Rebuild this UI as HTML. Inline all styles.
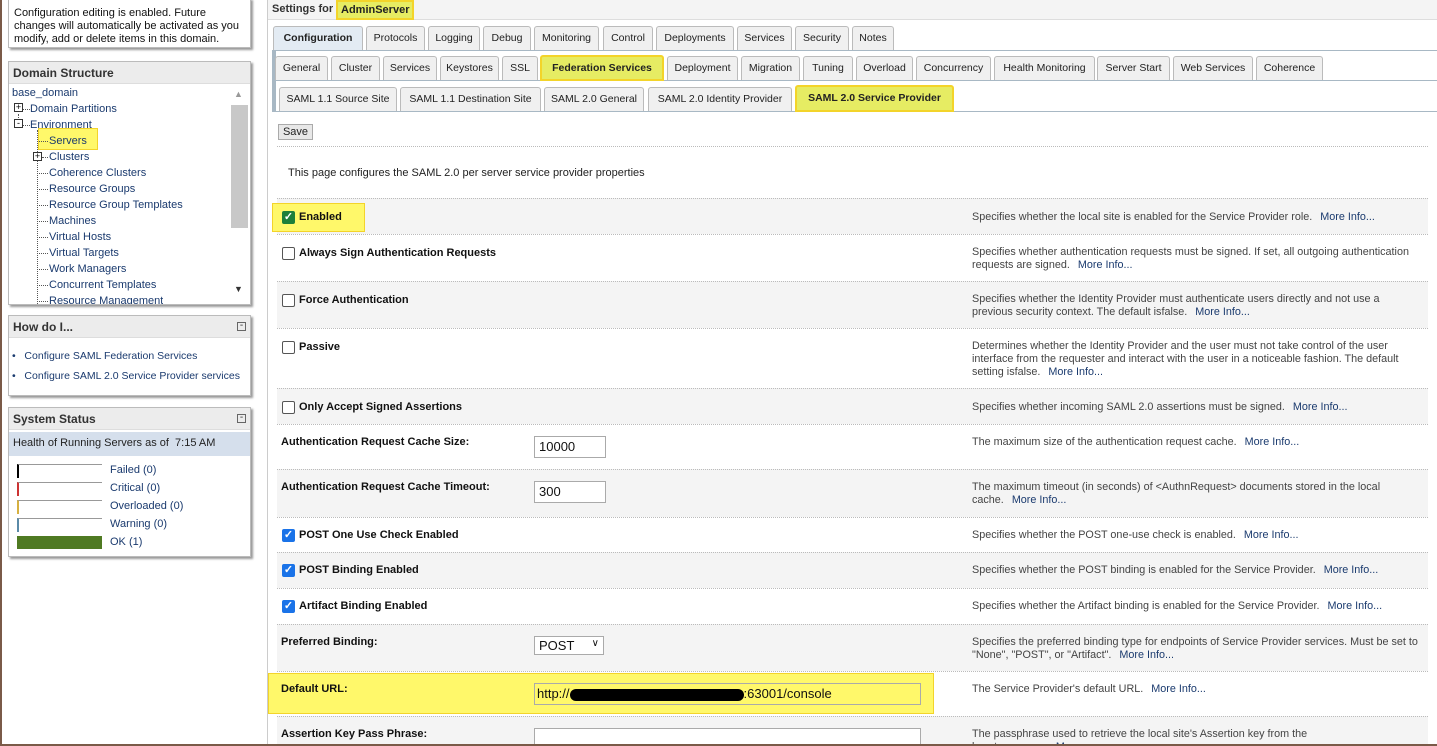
<!DOCTYPE html>
<html style="width:1437px;height:746px;overflow:hidden"><head><meta charset="utf-8">
<style>
*{box-sizing:border-box;margin:0;padding:0}
body{width:1437px;height:746px;overflow:hidden;background:#fff;font-family:"Liberation Sans",sans-serif;font-size:11px;color:#222;position:relative}
.a{position:absolute}
.box{position:absolute;border:1px solid #bbb;box-shadow:2px 2px 2px #999;background:#fff;overflow:hidden}
.hdr{background:#ececec;font-weight:bold;color:#333;font-size:12px;padding:4px 4px;height:22px;border-bottom:1px solid #ddd}
.lk{color:#1a3a6e;white-space:nowrap}
.tree div{position:absolute;font-size:11px;color:#1a3a6e;white-space:nowrap}
.tree .v{border-left:1px dotted #555;width:0}
.tree .h{border-top:1px dotted #555;height:0}
.tab{position:absolute;height:24px;border:1px solid #bbb;border-bottom:none;background:#f0f0f0;border-radius:3px 3px 0 0;text-align:center;font-size:10.5px;line-height:22px;color:#222;white-space:nowrap}
.hl{background:#e6ec63;border:2px solid #f3d42a;font-weight:bold}
.row{position:absolute;left:277px;width:1151px;border-top:1px dotted #bbb}
.g{background:#f4f4f4}
.lbl{position:absolute;left:22px;font-weight:bold;font-size:11px;color:#111}
.lbl2{position:absolute;left:4px;font-weight:bold;font-size:11px;color:#111}
.cb{position:absolute;left:5px;width:13px;height:13px;border:1px solid #555;border-radius:2px;background:#fff}
.cbc{background:#1a73e8;border-color:#1a73e8;color:#fff;font-size:11px;line-height:11px;text-align:center;font-weight:bold}
.desc{position:absolute;left:695px;width:446px;font-size:10.8px;color:#444;line-height:13px}
.desc span{color:#1a3a6e;margin-left:8px}
.inp{position:absolute;left:257px;height:22px;border:1px solid #aaa;background:#fff;font-size:13px;padding:2px 4px;color:#111;overflow:hidden}
</style></head><body>
<div class="a" style="left:0;top:0;width:2px;height:746px;background:#7a5a48"></div>
<div class="a" style="left:267px;top:0;width:1px;height:744px;background:#ccc"></div>

<div class="box" style="left:8px;top:-2px;width:243px;height:50px;padding:8px 5px;font-size:11px;line-height:13px;color:#111">Configuration editing is enabled. Future changes will automatically be activated as you modify, add or delete items in this domain.</div>

<div class="box" style="left:8px;top:61px;width:243px;height:244px">
<div class="hdr">Domain Structure</div>
<div class="tree">
<div class="v" style="left:9px;top:52px;height:14px"></div>
<div class="v" style="left:28px;top:68px;height:176px"></div>
<div class="h" style="left:14px;top:47px;width:7px"></div>
<div class="h" style="left:14px;top:63px;width:7px"></div>
<div class="h" style="left:28px;top:79px;width:11px"></div>
<div class="h" style="left:33px;top:95px;width:6px"></div>
<div class="h" style="left:28px;top:111px;width:11px"></div>
<div class="h" style="left:28px;top:127px;width:11px"></div>
<div class="h" style="left:28px;top:143px;width:11px"></div>
<div class="h" style="left:28px;top:159px;width:11px"></div>
<div class="h" style="left:28px;top:175px;width:11px"></div>
<div class="h" style="left:28px;top:191px;width:11px"></div>
<div class="h" style="left:28px;top:207px;width:11px"></div>
<div class="h" style="left:28px;top:223px;width:11px"></div>
<div class="h" style="left:28px;top:239px;width:11px"></div>
<div style="left:3px;top:25px">base_domain</div>
<div style="left:5px;top:41px;width:9px;height:9px;border:1px solid #333;background:#fff;font-size:9px;line-height:7px;text-align:center;color:#000">+</div><div style="left:21px;top:41px">Domain Partitions</div>
<div style="left:5px;top:57px;width:9px;height:9px;border:1px solid #333;background:#fff;font-size:9px;line-height:6px;text-align:center;color:#000">-</div><div style="left:21px;top:57px">Environment</div>
<div style="left:29px;top:66px;width:60px;height:22px;background:#fff86a;border:1px solid #f3d42a"></div>
<div class="h" style="left:30px;top:79px;width:9px"></div>
<div style="left:40px;top:73px">Servers</div>
<div style="left:24px;top:90px;width:9px;height:9px;border:1px solid #333;background:#fff;font-size:9px;line-height:7px;text-align:center;color:#000">+</div><div style="left:40px;top:89px">Clusters</div>
<div style="left:40px;top:105px">Coherence Clusters</div>
<div style="left:40px;top:121px">Resource Groups</div>
<div style="left:40px;top:137px">Resource Group Templates</div>
<div style="left:40px;top:153px">Machines</div>
<div style="left:40px;top:169px">Virtual Hosts</div>
<div style="left:40px;top:185px">Virtual Targets</div>
<div style="left:40px;top:201px">Work Managers</div>
<div style="left:40px;top:217px">Concurrent Templates</div>
<div style="left:40px;top:233px;height:9px;overflow:hidden">Resource Management</div>
</div>
<div class="a" style="left:222px;top:43px;width:17px;height:123px;background:#c8c8c8"></div>
<div class="a" style="left:225px;top:27px;font-size:9px;color:#999">▲</div>
<div class="a" style="left:225px;top:222px;font-size:9px;color:#333">▼</div>
</div>

<div class="box" style="left:8px;top:315px;width:243px;height:81px">
<div class="hdr">How do I...<span style="float:right;font-weight:normal;border:1px solid #666;width:9px;height:9px;line-height:6px;font-size:10px;text-align:center;margin-top:2px">-</span></div>
<div class="a lk" style="left:3px;top:34px;font-size:10.5px">•&nbsp;&nbsp; Configure SAML Federation Services</div>
<div class="a lk" style="left:3px;top:54px;font-size:10.5px">•&nbsp;&nbsp; Configure SAML 2.0 Service Provider services</div>
</div>

<div class="box" style="left:8px;top:407px;width:243px;height:150px">
<div class="hdr">System Status<span style="float:right;font-weight:normal;border:1px solid #666;width:9px;height:9px;line-height:6px;font-size:10px;text-align:center;margin-top:2px">-</span></div>
<div class="a" style="left:0;top:24px;width:241px;height:24px;background:#d5dfec;padding:5px 4px;font-size:11px">Health of Running Servers as of &nbsp;7:15 AM</div>
<div class="a" style="left:8px;top:56px;width:85px;height:14px;border-top:1px solid #999;border-left:2px solid #000"></div><div class="a lk" style="left:101px;top:56px">Failed (0)</div>
<div class="a" style="left:8px;top:74px;width:85px;height:14px;border-top:1px solid #999;border-left:2px solid #c33"></div><div class="a lk" style="left:101px;top:74px">Critical (0)</div>
<div class="a" style="left:8px;top:92px;width:85px;height:14px;border-top:1px solid #999;border-left:2px solid #d6b040"></div><div class="a lk" style="left:101px;top:92px">Overloaded (0)</div>
<div class="a" style="left:8px;top:110px;width:85px;height:14px;border-top:1px solid #999;border-left:2px solid #5a8aa8"></div><div class="a lk" style="left:101px;top:110px">Warning (0)</div>
<div class="a" style="left:8px;top:128px;width:85px;height:13px;background:#4f7a22"></div><div class="a lk" style="left:101px;top:128px">OK (1)</div>
</div>

<!-- Main -->
<div class="a" style="left:268px;top:0;width:1169px;height:20px;background:#f4f4f4;border-bottom:1px solid #ddd"></div>
<div class="a" style="left:272px;top:3px;font-weight:bold;font-size:11px;color:#333">Settings for</div>
<div class="a hl" style="left:336px;top:0;width:78px;height:20px;font-size:11px;line-height:16px;padding-left:3px">AdminServer</div>

<div class="a" style="left:272px;top:50px;width:1165px;height:1px;background:#a8b8c4"></div>
<div class="a" style="left:272px;top:50px;width:4px;height:62px;background:#a8b8c4"></div>
<div class="a" style="left:272px;top:80px;width:1165px;height:1px;background:#a8b8c4"></div>
<div class="a" style="left:272px;top:111px;width:1165px;height:1px;background:#a8b8c4"></div>

<div class="tab" style="left:273px;top:26px;width:90px;background:#e3ebf3;font-weight:bold">Configuration</div>
<div class="tab" style="left:366px;top:26px;width:59px">Protocols</div>
<div class="tab" style="left:428px;top:26px;width:52px">Logging</div>
<div class="tab" style="left:483px;top:26px;width:48px">Debug</div>
<div class="tab" style="left:534px;top:26px;width:65px">Monitoring</div>
<div class="tab" style="left:603px;top:26px;width:50px">Control</div>
<div class="tab" style="left:656px;top:26px;width:78px">Deployments</div>
<div class="tab" style="left:737px;top:26px;width:55px">Services</div>
<div class="tab" style="left:795px;top:26px;width:54px">Security</div>
<div class="tab" style="left:852px;top:26px;width:42px">Notes</div>

<div class="tab" style="left:275px;top:56px;width:53px">General</div>
<div class="tab" style="left:331px;top:56px;width:49px">Cluster</div>
<div class="tab" style="left:383px;top:56px;width:54px">Services</div>
<div class="tab" style="left:440px;top:56px;width:59px">Keystores</div>
<div class="tab" style="left:502px;top:56px;width:36px">SSL</div>
<div class="tab hl" style="left:540px;top:55px;width:124px;height:26px">Federation Services</div>
<div class="tab" style="left:667px;top:56px;width:71px">Deployment</div>
<div class="tab" style="left:741px;top:56px;width:59px">Migration</div>
<div class="tab" style="left:803px;top:56px;width:50px">Tuning</div>
<div class="tab" style="left:856px;top:56px;width:57px">Overload</div>
<div class="tab" style="left:916px;top:56px;width:75px">Concurrency</div>
<div class="tab" style="left:994px;top:56px;width:101px">Health Monitoring</div>
<div class="tab" style="left:1097px;top:56px;width:73px">Server Start</div>
<div class="tab" style="left:1173px;top:56px;width:80px">Web Services</div>
<div class="tab" style="left:1256px;top:56px;width:67px">Coherence</div>

<div class="tab" style="left:279px;top:87px;width:118px">SAML 1.1 Source Site</div>
<div class="tab" style="left:400px;top:87px;width:141px">SAML 1.1 Destination Site</div>
<div class="tab" style="left:544px;top:87px;width:100px">SAML 2.0 General</div>
<div class="tab" style="left:648px;top:87px;width:144px">SAML 2.0 Identity Provider</div>
<div class="tab hl" style="left:795px;top:85px;width:159px;height:27px">SAML 2.0 Service Provider</div>

<div class="a" style="left:278px;top:124px;width:35px;height:16px;border:1px solid #aaa;background:#e8e8e8;font-size:11px;text-align:center;line-height:14px">Save</div>
<div class="a" style="left:277px;top:146px;width:1151px;border-top:1px dotted #bbb"></div>
<div class="a" style="left:288px;top:167px;font-size:11px;color:#222">This page configures the SAML 2.0 per server service provider properties</div>

<div class="row g" style="top:198px;height:36px">
<div class="a" style="left:-5px;top:4px;width:93px;height:29px;background:#fff86a;border:1px solid #f3d42a"></div>
<div class="cb cbc" style="top:12px;background:#1d7f3a;border-color:#1d7f3a">✓</div><div class="lbl" style="top:12px">Enabled</div>
<div class="desc" style="top:12px">Specifies whether the local site is enabled for the Service Provider role.<span>More Info...</span></div></div>
<div class="row" style="top:234px;height:47px">
<div class="cb" style="top:12px"></div><div class="lbl" style="top:12px">Always Sign Authentication Requests</div>
<div class="desc" style="top:11px">Specifies whether authentication requests must be signed. If set, all outgoing authentication requests are signed.<span>More Info...</span></div></div>
<div class="row g" style="top:281px;height:47px">
<div class="cb" style="top:12px"></div><div class="lbl" style="top:12px">Force Authentication</div>
<div class="desc" style="top:11px">Specifies whether the Identity Provider must authenticate users directly and not use a previous security context. The default isfalse.<span>More Info...</span></div></div>
<div class="row" style="top:328px;height:60px">
<div class="cb" style="top:12px"></div><div class="lbl" style="top:12px">Passive</div>
<div class="desc" style="top:11px">Determines whether the Identity Provider and the user must not take control of the user interface from the requester and interact with the user in a noticeable fashion. The default setting isfalse.<span>More Info...</span></div></div>
<div class="row g" style="top:388px;height:36px">
<div class="cb" style="top:12px"></div><div class="lbl" style="top:12px">Only Accept Signed Assertions</div>
<div class="desc" style="top:12px">Specifies whether incoming SAML 2.0 assertions must be signed.<span>More Info...</span></div></div>
<div class="row" style="top:424px;height:45px">
<div class="lbl2" style="top:11px">Authentication Request Cache Size:</div>
<div class="inp" style="top:11px;width:72px">10000</div>
<div class="desc" style="top:11px">The maximum size of the authentication request cache.<span>More Info...</span></div></div>
<div class="row g" style="top:469px;height:48px">
<div class="lbl2" style="top:11px">Authentication Request Cache Timeout:</div>
<div class="inp" style="top:11px;width:72px">300</div>
<div class="desc" style="top:11px">The maximum timeout (in seconds) of &lt;AuthnRequest&gt; documents stored in the local cache.<span>More Info...</span></div></div>
<div class="row" style="top:517px;height:35px">
<div class="cb cbc" style="top:11px">✓</div><div class="lbl" style="top:11px">POST One Use Check Enabled</div>
<div class="desc" style="top:11px">Specifies whether the POST one-use check is enabled.<span>More Info...</span></div></div>
<div class="row g" style="top:552px;height:36px">
<div class="cb cbc" style="top:11px">✓</div><div class="lbl" style="top:11px">POST Binding Enabled</div>
<div class="desc" style="top:11px">Specifies whether the POST binding is enabled for the Service Provider.<span>More Info...</span></div></div>
<div class="row" style="top:588px;height:36px">
<div class="cb cbc" style="top:11px">✓</div><div class="lbl" style="top:11px">Artifact Binding Enabled</div>
<div class="desc" style="top:11px">Specifies whether the Artifact binding is enabled for the Service Provider.<span>More Info...</span></div></div>
<div class="row g" style="top:624px;height:47px">
<div class="lbl2" style="top:11px">Preferred Binding:</div>
<div class="inp" style="top:11px;width:70px;height:19px;padding:1px 4px">POST <span style="float:right;font-size:10px">&#x2228;</span></div>
<div class="desc" style="top:11px">Specifies the preferred binding type for endpoints of Service Provider services. Must be set to "None", "POST", or "Artifact".<span>More Info...</span></div></div>
<div class="row" style="top:671px;height:45px">
<div class="a" style="left:-9px;top:1px;width:666px;height:41px;background:#fff86a;border:1px solid #f3d42a"></div>
<div class="lbl2" style="top:11px">Default URL:</div>
<div class="inp" style="top:11px;width:387px;background:#fff86a;padding:2px 2px;font-size:13px">http://<span style="display:inline-block;width:174px;height:12px;background:#000;border-radius:6px;vertical-align:middle"></span>:63001/console</div>
<div class="desc" style="top:11px">The Service Provider's default URL.<span>More Info...</span></div></div>
<div class="row g" style="top:716px;height:28px;overflow:hidden">
<div class="lbl2" style="top:11px">Assertion Key Pass Phrase:</div>
<div class="inp" style="top:11px;width:387px;height:30px"></div>
<div class="desc" style="top:11px">The passphrase used to retrieve the local site's Assertion key from the keystore.<span style="margin-left:40px">More</span></div></div>
<div class="a" style="left:0;top:744px;width:1437px;height:2px;background:#7a5a48"></div>
</body></html>
